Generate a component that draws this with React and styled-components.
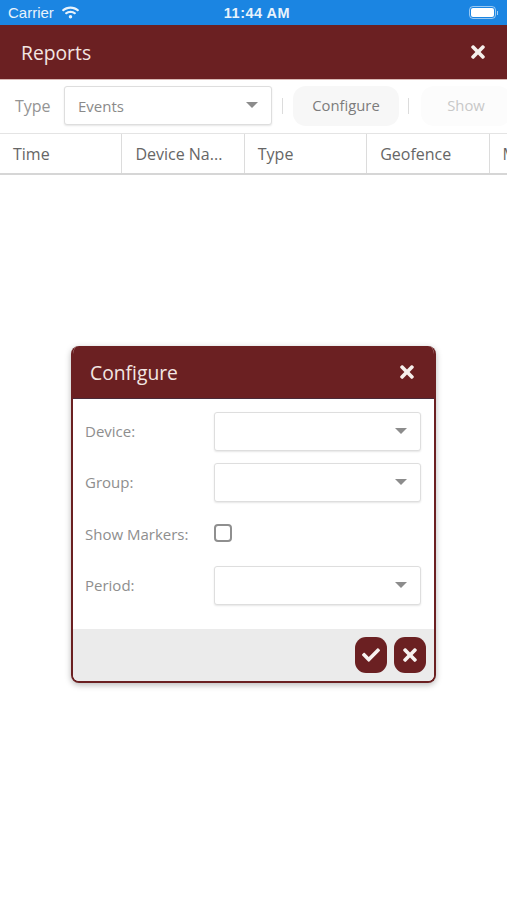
import React from "react";
import styled, { createGlobalStyle } from "styled-components";
import { FaTimes, FaCheck, FaWifi } from "react-icons/fa";

const GlobalStyle = createGlobalStyle`
  html, body {
    margin: 0;
    padding: 0;
    background: #fff;
    font-family: "Open Sans", "Liberation Sans", sans-serif;
  }
`;

const Page = styled.div`
  position: relative;
  width: 507px;
  height: 900px;
  overflow: hidden;
  background: #fff;
`;

const StatusBar = styled.div`
  height: 25px;
  background: #1b85e2;
  color: #fff;
  display: grid;
  grid-template-columns: 1fr auto 1fr;
  align-items: center;
  padding: 0 9px 0 8px;
  font-family: "Liberation Sans", sans-serif;
  font-size: 15px;
`;

const Carrier = styled.div`
  display: flex;
  align-items: center;
  gap: 8px;
  opacity: 0.9;
`;

const Clock = styled.div`
  margin-left: 8px;
  font-weight: 700;
  font-size: 14.5px;
  letter-spacing: 0.5px;
  opacity: 0.9;
`;

const BatteryWrap = styled.div`
  display: flex;
  justify-content: flex-end;
  align-items: center;
  gap: 1px;
`;

const Battery = styled.div`
  width: 27px;
  height: 13px;
  box-sizing: border-box;
  border: 1px solid rgba(255, 255, 255, 0.55);
  border-radius: 4px;
  padding: 1px;
  &::after {
    content: "";
    display: block;
    height: 100%;
    background: #fff;
    border-radius: 2px;
  }
`;

const BatteryCap = styled.div`
  width: 1px;
  height: 4px;
  background: rgba(255, 255, 255, 0.6);
`;

const TitleBar = styled.div`
  display: flex;
  align-items: center;
  justify-content: space-between;
  box-sizing: border-box;
  flex: none;
  background: #6b2022;
  color: #f3e6e2;
  height: ${(props) => props.$height}px;
  padding: ${(props) => props.$padding};
  font-size: 19.3px;
  border-bottom: 1px solid ${(props) => props.$line};
`;

const CloseIcon = styled(FaTimes)`
  color: #f5efec;
  font-size: 20px;
`;

const Toolbar = styled.div`
  display: flex;
  align-items: center;
  height: 53px;
  box-sizing: border-box;
  padding: 0 0 2px 15px;
  white-space: nowrap;
`;

const ToolLabel = styled.span`
  color: #949494;
  font-size: 16px;
  width: 49px;
  flex: none;
`;

const SelectBox = styled.div`
  display: flex;
  align-items: center;
  justify-content: space-between;
  box-sizing: border-box;
  flex: none;
  width: ${(props) => props.$width}px;
  height: 39px;
  padding: 0 13px;
  background: #fff;
  border: 1px solid #dedede;
  border-radius: 3px;
  box-shadow: 0 1px 2px rgba(0, 0, 0, 0.1);
  color: #8a8a8a;
  font-size: 15px;
`;

const Caret = styled.span`
  width: 0;
  height: 0;
  margin-top: -2px;
  border-left: 6.5px solid transparent;
  border-right: 6.5px solid transparent;
  border-top: 6.5px solid #8c8c8c;
`;

const Divider = styled.span`
  flex: none;
  width: 1px;
  height: 16px;
  background: #dcdcdc;
  margin: 0 ${(props) => props.$right}px 0 ${(props) => props.$left}px;
`;

const ToolButton = styled.div`
  display: flex;
  align-items: center;
  justify-content: center;
  flex: none;
  box-sizing: border-box;
  width: ${(props) => props.$width}px;
  height: 40px;
  padding-bottom: 2px;
  border-radius: 13px;
  background: ${(props) => (props.$muted ? "#fcfcfc" : "#f7f7f7")};
  color: ${(props) => (props.$muted ? "#c8c8c8" : "#7c7c7c")};
  font-size: 14.8px;
`;

const TableHead = styled.div`
  display: flex;
  height: 42px;
  box-sizing: border-box;
  border-top: 1px solid #e4e4e4;
  border-bottom: 2px solid #d6d6d6;
`;

const HeadCell = styled.div`
  flex: none;
  box-sizing: border-box;
  width: 122.4px;
  padding-left: 13px;
  line-height: 40px;
  color: #666;
  font-size: 16px;
  white-space: nowrap;
  overflow: hidden;
  border-right: 1px solid #dcdcdc;
`;

const Dialog = styled.div`
  position: absolute;
  left: 71px;
  top: 346px;
  width: 365px;
  height: 337px;
  box-sizing: border-box;
  display: flex;
  flex-direction: column;
  background: #fff;
  border-radius: 8px;
  border: 2px solid #6b2022;
  border-top: 0;
  overflow: hidden;
  box-shadow: 0 2px 6px rgba(0, 0, 0, 0.28);
`;

const DialogBody = styled.div`
  flex: 1;
  padding: 13px 13px 0 12px;
  display: flex;
  flex-direction: column;
`;

const FormRow = styled.div`
  display: grid;
  grid-template-columns: 129px 207px;
  align-items: center;
  height: ${(props) => props.$height}px;
  margin-bottom: ${(props) => props.$gap}px;
`;

const FormLabel = styled.span`
  color: #8e8e8e;
  font-size: 15px;
  padding: ${(props) => (props.$check ? "2px 0 0" : "0 0 2px")};
`;

const CheckBox = styled.span`
  display: block;
  width: 18px;
  height: 18px;
  box-sizing: border-box;
  border: 2px solid #8f8f8f;
  border-radius: 4px;
`;

const DialogFooter = styled.div`
  flex: none;
  box-sizing: border-box;
  height: 52px;
  background: #ebebeb;
  display: flex;
  justify-content: flex-end;
  align-items: flex-start;
  gap: 7px;
  padding: 8px 8px 0 0;
`;

const RoundButton = styled.div`
  width: 32px;
  height: 36px;
  border-radius: 11px;
  background: #6b2022;
  color: #f7f2f0;
  display: flex;
  align-items: center;
  justify-content: center;
  font-size: ${(props) => props.$size}px;
`;

const columns = ["Time", "Device Na...", "Type", "Geofence", "Motion"];

const fields = [
  { label: "Device:", gap: 12 },
  { label: "Group:", gap: 12 },
  { label: "Show Markers:", gap: 14, check: true },
  { label: "Period:", gap: 0 },
];

export default function App() {
  return (
    <Page>
      <GlobalStyle />
      <StatusBar>
        <Carrier>
          Carrier <FaWifi size={17} />
        </Carrier>
        <Clock>11:44 AM</Clock>
        <BatteryWrap>
          <Battery />
          <BatteryCap />
        </BatteryWrap>
      </StatusBar>
      <TitleBar $height={55} $padding="0 19px 0 21px" $line="#d9b9b5">
        Reports
        <CloseIcon />
      </TitleBar>
      <Toolbar>
        <ToolLabel>Type</ToolLabel>
        <SelectBox $width={208}>
          Events
          <Caret />
        </SelectBox>
        <Divider $left={10} $right={10} />
        <ToolButton $width={106}>Configure</ToolButton>
        <Divider $left={9} $right={12} />
        <ToolButton $width={90} $muted>
          Show
        </ToolButton>
      </Toolbar>
      <TableHead>
        {columns.map((name) => (
          <HeadCell key={name}>{name}</HeadCell>
        ))}
      </TableHead>

      <Dialog>
        <TitleBar $height={53} $padding="0 17px 0 17px" $line="#4a2a38">
          Configure
          <CloseIcon />
        </TitleBar>
        <DialogBody>
          {fields.map((field) => (
            <FormRow
              key={field.label}
              $height={field.check ? 38 : 39}
              $gap={field.gap}
            >
              <FormLabel $check={field.check}>{field.label}</FormLabel>
              {field.check ? (
                <CheckBox />
              ) : (
                <SelectBox $width={207}>
                  <span />
                  <Caret />
                </SelectBox>
              )}
            </FormRow>
          ))}
        </DialogBody>
        <DialogFooter>
          <RoundButton $size={18}>
            <FaCheck />
          </RoundButton>
          <RoundButton $size={20}>
            <FaTimes />
          </RoundButton>
        </DialogFooter>
      </Dialog>
    </Page>
  );
}
